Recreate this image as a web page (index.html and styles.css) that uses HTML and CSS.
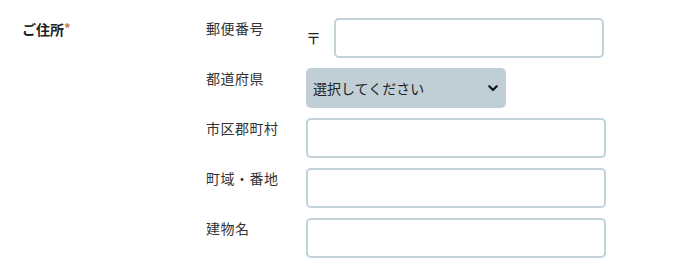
FILE: index.html
```html
<!DOCTYPE html>
<html lang="ja">
<head>
<meta charset="utf-8">
<link rel="stylesheet" href="styles.css">
</head>
<body>
<div class="section">
  <div class="main-label">ご住所<span class="req">*</span></div>
  <div class="fields">
    <div class="row">
      <div class="sub-label">郵便番号</div>
      <div class="zip">
        <span class="zip-mark">〒</span>
        <div class="input zip-input"></div>
      </div>
    </div>
    <div class="row">
      <div class="sub-label">都道府県</div>
      <div class="select">
        <span>選択してください</span>
        <svg class="chev" width="10" height="7" viewBox="0 0 10 7"><path d="M1.3 1.3 L5 5 L8.7 1.3" fill="none" stroke="#111" stroke-width="2.2" stroke-linecap="round" stroke-linejoin="round"/></svg>
      </div>
    </div>
    <div class="row">
      <div class="sub-label">市区郡町村</div>
      <div class="input"></div>
    </div>
    <div class="row">
      <div class="sub-label">町域・番地</div>
      <div class="input"></div>
    </div>
    <div class="row">
      <div class="sub-label">建物名</div>
      <div class="input"></div>
    </div>
  </div>
</div>
</body>
</html>
```
FILE: styles.css
```css
html, body {
  margin: 0;
  padding: 0;
  background: #fff;
}
body {
  font-family: "Noto Sans CJK JP", "Noto Sans", sans-serif;
  font-size: 14px;
  color: #333;
}
.section {
  display: flex;
  padding: 18px 0 0 22px;
}
.main-label {
  width: 184px;
  line-height: 20px;
  padding-top: 1px;
  font-weight: 700;
  color: #222;
}
.req {
  color: #c47a35;
  font-size: 13px;
  vertical-align: top;
  line-height: 18px;
}
.fields {
  display: flex;
  flex-direction: column;
  gap: 10px;
}
.row {
  display: flex;
  height: 40px;
}
.sub-label {
  width: 100px;
  line-height: 20px;
  letter-spacing: 0.5px;
}
.zip {
  display: flex;
  align-items: center;
}
.zip-mark {
  width: 28px;
  font-size: 15px;
  line-height: 20px;
  padding-top: 0;
  padding-left: 0;
  box-sizing: border-box;
  color: #222;
}
.input {
  width: 300px;
  height: 40px;
  box-sizing: border-box;
  border: 2px solid #c3d1d8;
  border-radius: 5px;
  background: #fff;
}
.zip-input {
  width: 270px;
}
.select {
  width: 200px;
  height: 40px;
  box-sizing: border-box;
  background: #c0ced5;
  border-radius: 5px;
  display: flex;
  align-items: center;
  justify-content: space-between;
  padding: 0 8px 0 7px;
  color: #222;
}
.chev {
  display: block;
}
```
